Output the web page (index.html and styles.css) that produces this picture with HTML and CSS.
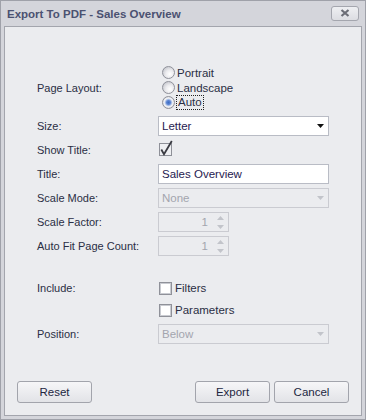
FILE: index.html
```html
<!DOCTYPE html>
<html lang="en">
<head>
    <meta charset="UTF-8">
    <title>Export To PDF - Sales Overview</title>
    <link rel="stylesheet" href="styles.css">
</head>
<body>
    <div class="window">
        <!-- Title bar -->
        <div class="titlebar">
            <span class="caption">Export To PDF - Sales Overview</span>
            <button class="close" title="Close">
                <svg width="10" height="8" viewBox="0 0 10 8"><path d="M1.5 1L8.5 7M8.5 1L1.5 7" stroke="#6b6d76" stroke-width="2.2"/></svg>
            </button>
        </div>

        <div class="panel">
            <div class="form">
                <div class="row row-layout">
                    <span class="label">Page Layout:</span>
                    <div class="radios">
                        <div class="radio-item"><span class="radio"></span><span>Portrait</span></div>
                        <div class="radio-item"><span class="radio"></span><span>Landscape</span></div>
                        <div class="radio-item"><span class="radio checked"></span><span class="focus">Auto</span></div>
                    </div>
                </div>

                <div class="row">
                    <span class="label">Size:</span>
                    <div class="combo"><span class="value">Letter</span>
                        <svg width="7" height="4"><path d="M0 0h7L3.5 4z" fill="#111"/></svg>
                    </div>
                </div>

                <div class="row">
                    <span class="label">Show Title:</span>
                    <svg class="check" width="16" height="17" viewBox="0 0 16 17">
                        <rect x="2.5" y="3.5" width="12" height="12" fill="#eeeff2" stroke="#8e9098"/>
                        <path d="M4.3 9.5L7 14.3L14.8 1" fill="none" stroke="#3a3b42" stroke-width="1.8"/>
                    </svg>
                </div>

                <div class="row">
                    <span class="label">Title:</span>
                    <div class="textbox">Sales Overview</div>
                </div>

                <div class="row">
                    <span class="label">Scale Mode:</span>
                    <div class="combo disabled"><span class="value">None</span>
                        <svg width="7" height="4"><path d="M0 0h7L3.5 4z" fill="#c2c4ca"/></svg>
                    </div>
                </div>

                <div class="row">
                    <span class="label">Scale Factor:</span>
                    <div class="spin"><span class="value">1</span>
                        <span class="spin-btns">
                            <svg width="7" height="4"><path d="M0 4h7L3.5 0z" fill="#c2c4ca"/></svg>
                            <svg width="7" height="4"><path d="M0 0h7L3.5 4z" fill="#c2c4ca"/></svg>
                        </span>
                    </div>
                </div>

                <div class="row">
                    <span class="label">Auto Fit Page Count:</span>
                    <div class="spin"><span class="value">1</span>
                        <span class="spin-btns">
                            <svg width="7" height="4"><path d="M0 4h7L3.5 0z" fill="#c2c4ca"/></svg>
                            <svg width="7" height="4"><path d="M0 0h7L3.5 4z" fill="#c2c4ca"/></svg>
                        </span>
                    </div>
                </div>

                <div class="row row-include">
                    <span class="label">Include:</span>
                    <div class="checkitem"><span class="box"></span><span>Filters</span></div>
                </div>

                <div class="row row-params">
                    <span class="label"></span>
                    <div class="checkitem"><span class="box"></span><span>Parameters</span></div>
                </div>

                <div class="row">
                    <span class="label">Position:</span>
                    <div class="combo disabled"><span class="value">Below</span>
                        <svg width="7" height="4"><path d="M0 0h7L3.5 4z" fill="#c2c4ca"/></svg>
                    </div>
                </div>
            </div>

            <!-- Bottom buttons -->
            <div class="buttons">
                <button class="btn">Reset</button>
                <span class="spacer"></span>
                <button class="btn">Export</button>
                <button class="btn">Cancel</button>
            </div>
        </div>
    </div>
</body>
</html>
```

FILE: styles.css
```css
/* Dialog window */
body {
    margin: 0;
    font-family: "Liberation Sans", Arial, sans-serif;
    font-size: 11px;
    color: #2a2e44;
}

.window {
    width: 366px;
    height: 420px;
    box-sizing: border-box;
    border: 1px solid #9fa1a9;
    background: #d4d5db;
    padding: 0 3px 3px;
    display: flex;
    flex-direction: column;
}

.titlebar {
    height: 25px;
    display: flex;
    align-items: center;
    justify-content: space-between;
    padding: 0 3px;
}

.caption {
    font-weight: bold;
    font-size: 11.5px;
    color: #4b5171;
}

.close {
    width: 28px;
    height: 15px;
    margin-top: -1px;
    padding: 0;
    border: 1px solid #a4a6ae;
    border-radius: 3px;
    background: linear-gradient(#eeeff2, #dcdde2);
    display: flex;
    align-items: center;
    justify-content: center;
}

.panel {
    flex: 1;
    border: 1px solid #a3a5ad;
    background: #ebecef;
    display: flex;
    flex-direction: column;
}

/* Form rows */
.form {
    padding: 38px 0 0 32px;
}

.row {
    display: flex;
    align-items: center;
    height: 20px;
    margin-top: 4px;
}

.row-layout {
    height: 45px;
    margin-top: 0;
    margin-bottom: 6px;
}

.row-include {
    margin-top: 22px;
}

.row-params {
    margin-top: 2px;
}

.label {
    width: 121px;
    flex-shrink: 0;
}

/* Radio group */
.radios {
    display: flex;
    flex-direction: column;
    padding-left: 4px;
}

.radio-item {
    height: 15px;
    display: flex;
    align-items: center;
    gap: 2px;
    font-size: 11.5px;
}

.radio {
    width: 13px;
    height: 13px;
    box-sizing: border-box;
    border-radius: 50%;
    border: 1px solid #8f919a;
    background: radial-gradient(circle at 62% 64%, #ffffff 0, #ececef 40%, #b6b8c0 100%);
}

.radio.checked {
    background: radial-gradient(circle at 50% 50%, #3c6cc4 0, #5d86d2 2px, #b9cbeb 3.3px, #f4f4f6 4.3px, #b6b8c0 100%);
}

.focus {
    outline: 1px dotted #222;
    padding: 0 1px;
    line-height: 13px;
}

/* Inputs */
.combo,
.textbox,
.spin {
    width: 171px;
    height: 20px;
    box-sizing: border-box;
    border: 1px solid #b9bcc5;
    background: #fff;
    display: flex;
    align-items: center;
    padding: 0 4px 0 3px;
    color: #1f2150;
    font-size: 11.5px;
}

.combo {
    justify-content: space-between;
}

.combo.disabled,
.spin {
    background: #ebecef;
    border-color: #cacbd1;
    color: #a3a5ae;
}

.spin {
    width: 71px;
    justify-content: flex-end;
    padding-right: 0;
}

.spin-btns {
    width: 16px;
    display: flex;
    flex-direction: column;
    align-items: center;
    gap: 5px;
    margin-left: 4px;
}

.check {
    margin-left: -1px;
    margin-top: -3px;
}

/* Check items */
.checkitem {
    display: flex;
    align-items: center;
    gap: 3px;
    padding-left: 1px;
    font-size: 11.5px;
}

.box {
    width: 13px;
    height: 13px;
    box-sizing: border-box;
    border: 1px solid #8f9199;
    box-shadow: inset 0 0 0 1px #c9cbd1;
    background: #fff;
}

/* Buttons */
.buttons {
    margin-top: auto;
    display: flex;
    gap: 4px;
    padding: 0 12px 12px;
}

.spacer {
    flex: 1;
}

.btn {
    width: 75px;
    height: 22px;
    border: 1px solid #a2a4ac;
    border-radius: 3px;
    background: linear-gradient(#f6f6f8, #e2e3e7);
    font-family: "Liberation Sans", Arial, sans-serif;
    font-size: 11.5px;
    color: #22263f;
    padding: 0;
}
```
